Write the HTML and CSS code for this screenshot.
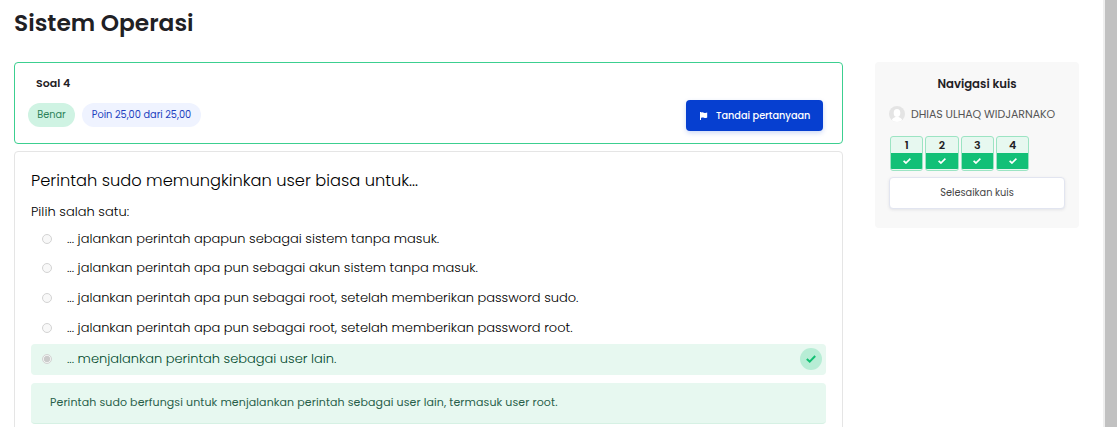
FILE: index.html
```html
<!DOCTYPE html>
<html lang="id">
<head>
<meta charset="utf-8">
<title>Sistem Operasi</title>
<link rel="stylesheet" href="styles.css">
</head>
<body>
<div class="page">
  <main class="main">
    <h1 class="title"><span>Sistem Operasi</span></h1>
    <section class="info">
      <h2 class="info-no"><span>Soal 4</span></h2>
      <div class="info-row">
        <span class="pill pill-ok"><span>Benar</span></span>
        <span class="pill pill-grade"><span>Poin 25,00 dari 25,00</span></span>
        <button class="flag"><svg width="8" height="8" viewBox="0 0 8 8"><path d="M0 0h1v.6C2.300 0 3 .2 4 .7 5.200 1.200 6 .9 7.200.5v5C6 6.100 5 6.300 4 5.800 3 5.400 2 5.400 1 5.900V8H0z" fill="#fff"/></svg><span>Tandai pertanyaan</span></button>
      </div>
    </section>
    <section class="question">
      <p class="q-text"><span>Perintah sudo memungkinkan user biasa untuk...</span></p>
      <p class="q-prompt"><span>Pilih salah satu:</span></p>
      <div class="opt"><i class="radio"></i><span>... jalankan perintah apapun sebagai sistem tanpa masuk.</span></div>
      <div class="opt"><i class="radio"></i><span>... jalankan perintah apa pun sebagai akun sistem tanpa masuk.</span></div>
      <div class="opt"><i class="radio"></i><span>... jalankan perintah apa pun sebagai root, setelah memberikan password sudo.</span></div>
      <div class="opt"><i class="radio"></i><span>... jalankan perintah apa pun sebagai root, setelah memberikan password root.</span></div>
      <div class="opt opt-correct"><i class="radio radio-on"></i><span>... menjalankan perintah sebagai user lain.</span>
        <b class="mark"><svg width="10" height="8" viewBox="0 0 10 8"><path d="M.8 4 3.700 6.600 9.200 1" fill="none" stroke="#12bf72" stroke-width="2"/></svg></b></div>
      <div class="feedback"><span>Perintah sudo berfungsi untuk menjalankan perintah sebagai user lain, termasuk user root.</span></div>
    </section>
  </main>
  <aside class="nav">
    <h3 class="nav-title"><span>Navigasi kuis</span></h3>
    <div class="user"><svg width="16" height="16" viewBox="0 0 16 16"><clipPath id="c"><circle cx="8" cy="8" r="8"/></clipPath><g clip-path="url(#c)"><path d="M0 0h16v16H0z" fill="#e4e4e4"/><ellipse cx="8" cy="7" rx="3.300" ry="4" fill="#fff"/><path d="M2.500 16c0-3 1.500-4.300 4-5h3c2.500.7 4 2 4 5z" fill="#fff"/></g></svg><span>DHIAS ULHAQ WIDJARNAKO</span></div>
    <div class="cells">
      <a class="cell"><b>1</b><i><svg width="8" height="6" viewBox="0 0 8 6"><path d="M.6 2.900 2.900 5 7.400.7" fill="none" stroke="#fff" stroke-width="1.700"/></svg></i></a>
      <a class="cell"><b>2</b><i><svg width="8" height="6" viewBox="0 0 8 6"><path d="M.6 2.900 2.900 5 7.400.7" fill="none" stroke="#fff" stroke-width="1.700"/></svg></i></a>
      <a class="cell"><b>3</b><i><svg width="8" height="6" viewBox="0 0 8 6"><path d="M.6 2.900 2.900 5 7.400.7" fill="none" stroke="#fff" stroke-width="1.700"/></svg></i></a>
      <a class="cell"><b>4</b><i><svg width="8" height="6" viewBox="0 0 8 6"><path d="M.6 2.900 2.900 5 7.400.7" fill="none" stroke="#fff" stroke-width="1.700"/></svg></i></a>
    </div>
    <button class="finish"><span>Selesaikan kuis</span></button>
  </aside>
  <div class="scroll"></div>
</div>
</body>
</html>
```
FILE: styles.css
```css
* { box-sizing: border-box; margin: 0; padding: 0; }
body { font-family: Poppins, Inter, sans-serif; color: #1f2125; background: #fff; overflow: hidden; }
span { white-space: nowrap; }
svg { display: block; flex: none; }
.page { display: flex; height: 427px; overflow: hidden; }
.main { width: 829px; margin-left: 14px; flex: none; }
.title { height: 62px; padding-top: 5px; font-size: 23.300px; line-height: 36px; font-weight: 600; }
.info { height: 82px; border: 1px solid #3ccf90; border-radius: 4px; padding: 11px 19px 0 13px; }
.info-no { padding-left: 8px; font-size: 11px; line-height: 18px; font-weight: 600; letter-spacing: .05px; }
.info-row { display: flex; align-items: flex-start; padding-top: 8px; }
.pill { display: flex; align-items: center; justify-content: center; height: 24px; margin-top: 3px; border-radius: 12px; font-size: 9.750px; }
.pill-ok { width: 47px; background: #cff3e3; color: #2d8259; }
.pill-grade { width: 119px; margin-left: 7px; background: #eff3ff; color: #1d3fc0; }
.flag { display: flex; align-items: center; width: 137px; height: 31px; margin-left: auto; padding-left: 14px; gap: 8px; border: 0; border-radius: 4px; background: #063fd0; color: #fff; font: 500 9.750px Poppins, Inter, sans-serif; letter-spacing: -.03px; box-shadow: 0 2px 5px rgba(6,63,208,.2); }
.question { height: 300px; margin-top: 7px; border: 1px solid #e5e5e5; border-radius: 4px; padding: 16px 16px 0; }
.q-text { font-size: 16.250px; line-height: 26px; }
.q-prompt { margin-top: 8px; font-size: 13px; line-height: 20px; letter-spacing: .03px; }
.q-text, .q-prompt, .opt { font-weight: 300; color: #000; }
.q-prompt { margin-bottom: 2px; }
.opt { display: flex; align-items: center; height: 29.600px; padding-left: 11px; font-size: 13px; letter-spacing: -.01px; }
.radio { width: 10px; height: 10px; margin-right: 15px; border: 1px solid #d3d3d3; border-radius: 50%; background: #f8f8f8; flex: none; }
.radio-on { background: radial-gradient(circle, #cbcbcb 0 2.800px, #f1f3f2 3.500px); }
.opt-correct { height: 31px; margin-top: 1.400px; padding-right: 4px; border-radius: 4px; background: #e7f8f0; color: #00492b; }
.mark { display: flex; align-items: center; justify-content: center; width: 22px; height: 22px; margin-left: auto; border-radius: 50%; background: #b7edd5; }
.feedback { display: flex; align-items: center; height: 41px; margin-top: 8px; padding: 0 0 1px 19px; border-radius: 4px; border-bottom: 1px solid #d6f1e4; background: #e7f8f0; color: #28604a; font-size: 11px; letter-spacing: .105px; }
.nav { width: 204px; height: 166px; margin: 62px 0 0 32px; padding: 12px 14px 0; border-radius: 4px; background: #f8f8f8; flex: none; }
.nav-title { font-size: 11.700px; line-height: 20px; font-weight: 600; text-align: center; }
.user { display: flex; align-items: center; gap: 6px; height: 20px; margin-top: 10px; font-size: 11px; letter-spacing: -.05px; color: #555; }
.cells { display: flex; gap: 2px; margin: 12px 0 0 1px; }
.cell { width: 33.300px; height: 35px; border: 1px solid #9ce4c3; border-radius: 3px; background: #e7f8f0; overflow: hidden; padding-bottom: 1px; }
.cell b { display: block; height: 16px; font-size: 11px; line-height: 17px; text-align: center; font-weight: 600; }
.cell i { display: flex; align-items: center; justify-content: center; height: 16px; background: #12c077; }
.finish { display: block; width: 176px; height: 32px; margin-top: 6px; border: 1px solid #e2e5f0; border-radius: 4px; background: #fff; color: #454545; font: 400 9.750px Poppins, Inter, sans-serif; box-shadow: 0 1px 3px rgba(40,50,80,.1); }
.scroll { width: 14px; margin-left: auto; border-left: 2px solid #efefef; background: #c1c1c1; }
```
